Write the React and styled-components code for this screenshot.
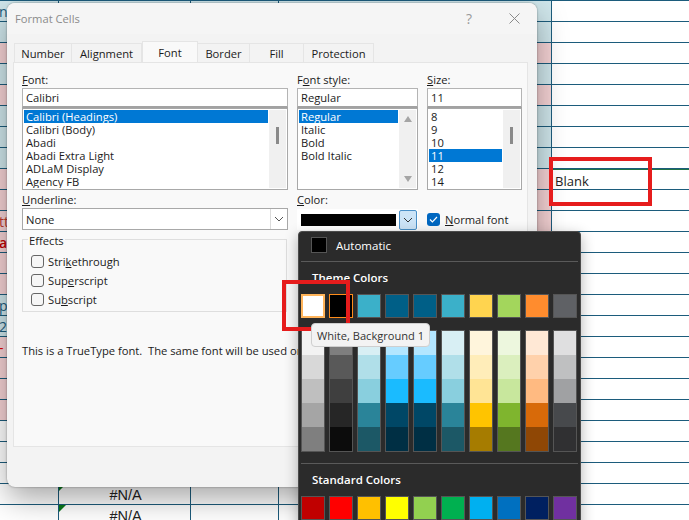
import styled, { createGlobalStyle } from "styled-components";

const Global = createGlobalStyle`
  html, body {
    margin: 0;
    height: 520px;
    overflow: hidden;
    background: #fff;
    font-family: "Open Sans", "Noto Sans", sans-serif;
    font-size: 11.2px;
    color: #1b1b1b;
  }
`;

const LINE = "#1c5c7c";

const Screen = styled.div`
  position: relative;
  width: 689px;
  height: 520px;
  overflow: hidden;
`;

/* ---------- sheet behind the dialog ---------- */
const Sheet = styled.div`
  margin-top: -20px;
`;

const Row = styled.div`
  display: grid;
  grid-template-columns: 59px 132px 88px 273px 1fr;
  height: 21px;
  box-sizing: border-box;
  border-bottom: 1px solid ${LINE};
`;

const Cell = styled.div`
  background: ${(p) => p.$fill || "transparent"};
  border-right: ${(p) => (p.$last ? "none" : `1px solid ${LINE}`)};
  overflow: hidden;
  white-space: nowrap;
`;

const LeadText = styled.span`
  display: block;
  line-height: 22px;
  font-size: 14px;
  font-weight: ${(p) => (p.$bold ? 600 : 400)};
  color: ${(p) => p.$color};
  margin-left: -1px;
`;

const NaText = styled.div`
  padding-left: 2px;
  text-align: center;
  font-family: "Liberation Sans", sans-serif;
  font-size: 14.5px;
  line-height: 23px;
  color: #222;
`;

const GreenCorner = styled.span`
  position: absolute;
  width: 0;
  height: 0;
  border-top: 7px solid #0a7a1c;
  border-right: 7px solid transparent;
`;

const BlankCell = styled.div`
  margin: -1px 0 -2px -1px;
  border-top: 2px solid #217346;
  border-bottom: 2px solid #217346;
  padding-left: 4px;
  font-family: "Open Sans", sans-serif;
  font-size: 13px;
  line-height: 23px;
  height: 20px;
  color: #222;
`;

/* ---------- dialog ---------- */
const Dialog = styled.div`
  position: absolute;
  left: 7px;
  top: 3px;
  width: 530px;
  height: 484px;
  box-sizing: border-box;
  background: #f3f3f3;
  border-radius: 8px;
  box-shadow: 0 0 2px rgba(0, 0, 0, 0.45), 0 12px 30px rgba(0, 0, 0, 0.34);
  overflow: hidden;
`;

const TitleBar = styled.div`
  display: flex;
  align-items: center;
  height: 31px;
  padding: 0 17px 0 8px;
  background: #f5f5f5;
  color: #8b8b8b;
`;

const Title = styled.div`
  flex: 1;
`;

const Help = styled.div`
  width: 43px;
  font-size: 14px;
  color: #9a9a9a;
`;

const Tabs = styled.div`
  display: flex;
  align-items: flex-end;
  height: 28px;
  padding-left: 7px;
`;

const Tab = styled.div`
  width: ${(p) => p.$w}px;
  height: ${(p) => (p.$active ? 21 : 19)}px;
  box-sizing: border-box;
  display: flex;
  align-items: center;
  justify-content: center;
  background: ${(p) => (p.$active ? "#f9f9f9" : "#f3f3f3")};
  border: 1px solid #e5e5e5;
  border-bottom: none;
  border-left: ${(p) => (p.$first || p.$active ? "1px solid #e5e5e5" : "none")};
`;

const Panel = styled.div`
  width: 515px;
  height: 385px;
  margin-left: 6px;
  box-sizing: border-box;
  padding: 10px 8px 0;
  background: #f9f9f9;
  border: 1px solid #e5e5e5;
  overflow: hidden;
`;

const Fields = styled.div`
  display: grid;
  grid-template-columns: 266px 121px 95px;
  column-gap: 9px;
`;

const Label = styled.div`
  height: 15px;
  line-height: 14px;
  margin-top: ${(p) => p.$top || 0}px;
`;

const TextBox = styled.div`
  height: 20px;
  box-sizing: border-box;
  border: 1px solid #b4b4b4;
  border-bottom: 2px solid #a2a2a2;
  background: #fff;
  padding-left: 3px;
  line-height: 18px;
`;

const ListBox = styled.div`
  display: flex;
  height: 82px;
  box-sizing: border-box;
  border: 1px solid #a8a8a8;
  background: #fff;
  padding: 1px;
`;

const Items = styled.div`
  flex: 1;
  overflow: hidden;
`;

const Item = styled.div`
  height: 13px;
  line-height: 13px;
  padding-left: 2px;
  background: ${(p) => (p.$on ? "#0078d4" : "transparent")};
  color: ${(p) => (p.$on ? "#fff" : "#1b1b1b")};
  white-space: nowrap;
`;

const Track = styled.div`
  position: relative;
  width: ${(p) => p.$w || 17}px;
  margin-left: 1px;
  background: #f0f0f0;
  display: flex;
  flex-direction: column;
  align-items: center;
`;

const Thumb = styled.div`
  width: 3px;
  height: 17px;
  margin-top: ${(p) => p.$top}px;
  background: #8a8a8a;
`;

const Arrow = styled.div`
  width: 0;
  height: 0;
  margin-top: ${(p) => (p.$down ? "auto" : "6px")};
  margin-bottom: ${(p) => (p.$down ? "6px" : "0")};
  border-left: 4px solid transparent;
  border-right: 4px solid transparent;
  ${(p) => (p.$down ? "border-top" : "border-bottom")}: 6px solid #a5a5a5;
`;

const SelectBox = styled.div`
  display: flex;
  height: 22px;
  box-sizing: border-box;
  border: 1px solid #a8a8a8;
  background: #fff;
  align-items: center;
  padding-left: 3px;
`;

const SelectText = styled.div`
  flex: 1;
`;

const Chevron = styled.div`
  width: 16px;
  height: 20px;
  display: flex;
  align-items: center;
  justify-content: center;
  border-left: 1px solid #dcdcdc;
`;

const ColorBox = styled.div`
  display: flex;
  align-items: center;
  height: 21px;
  margin-top: 1px;
  padding: 0 1px 0 4px;
  background: #fff;
`;

const ColorBar = styled.div`
  width: 96px;
  height: 12px;
  background: #000;
`;

const ColorButton = styled.div`
  width: 16px;
  height: 18px;
  margin-left: 3px;
  display: flex;
  align-items: center;
  justify-content: center;
  background: #cce4f7;
  border: 1px solid #4a90c8;
  border-radius: 2px;
`;

const NormalRow = styled.div`
  display: flex;
  align-items: center;
  gap: 5px;
  height: 20px;
  margin-top: 1px;
`;

const Tick = styled.div`
  width: 13px;
  height: 13px;
  border-radius: 3px;
  background: #0067c0;
  display: flex;
  align-items: center;
  justify-content: center;
`;

const Group = styled.div`
  position: relative;
  width: 265px;
  height: 73px;
  box-sizing: border-box;
  margin-top: 9px;
  padding: 12px 0 0 8px;
  border: 1px solid #dedede;
`;

const Legend = styled.div`
  position: absolute;
  top: -6px;
  left: 5px;
  padding: 0 1px;
  background: #f9f9f9;
  line-height: 13px;
`;

const Check = styled.div`
  display: flex;
  align-items: center;
  gap: 4px;
  height: 19px;
`;

const Box = styled.div`
  width: 11px;
  height: 11px;
  border: 1px solid #666;
  border-radius: 3px;
  background: #f6f6f6;
`;

const Info = styled.div`
  margin-top: 31px;
  line-height: 16px;
  white-space: nowrap;
`;

/* ---------- colour picker ---------- */
const Picker = styled.div`
  position: absolute;
  left: 298px;
  top: 231px;
  width: 283px;
  height: 310px;
  box-sizing: border-box;
  padding: 4px 2px 0;
  background: #2b2b2b;
  border: 1px solid #4b4b4b;
  border-radius: 4px;
  box-shadow: 0 4px 14px rgba(0, 0, 0, 0.3);
  color: #fff;
  font-size: 11.5px;
`;

const AutoRow = styled.div`
  display: flex;
  align-items: center;
  gap: 9px;
  height: 18px;
  padding-left: 10px;
`;

const AutoSwatch = styled.div`
  width: 14px;
  height: 14px;
  background: #000;
  border: 1px solid #555;
`;

const Rule = styled.div`
  height: 1px;
  margin: ${(p) => p.$m};
  background: #5a5a5a;
`;

const Heading = styled.div`
  height: 16px;
  line-height: 16px;
  padding-left: 11px;
  font-weight: 600;
  margin-bottom: 8px;
`;

const Swatches = styled.div`
  display: grid;
  grid-template-columns: repeat(10, 24px);
  column-gap: 4px;
  margin-bottom: ${(p) => p.$mb || 0}px;
`;

const Swatch = styled.div`
  height: 24px;
  box-sizing: border-box;
  background: ${(p) => p.$c};
  border: 1px solid ${(p) => p.$edge || "#555"};
  outline: ${(p) => (p.$ring ? `1px solid ${p.$ring}` : "none")};
  outline-offset: -2px;
`;

const Strip = styled.div`
  border: 1px solid #555;
  margin: -1px 0;
  display: flex;
  flex-direction: column;
`;

const Shade = styled.div`
  height: 24px;
  background: ${(p) => p.$c};
`;

const Tooltip = styled.div`
  position: absolute;
  left: 311px;
  top: 323px;
  height: 24px;
  box-sizing: border-box;
  padding: 0 5px;
  display: flex;
  align-items: center;
  background: #f3f3f3;
  border: 1px solid #cfcfcf;
  border-radius: 4px;
  font-size: 11.1px;
  color: #333;
  white-space: nowrap;
`;

/* red boxes drawn on top of the screenshot */
const Mark = styled.div`
  position: absolute;
  left: ${(p) => p.$x}px;
  top: ${(p) => p.$y}px;
  width: ${(p) => p.$w}px;
  height: ${(p) => p.$h}px;
  box-sizing: border-box;
  border: 4.5px solid #e61c1c;
`;

const rowFills = (() => {
  const blue = "#cfe6eb";
  const pink = "#f5d2d4";
  const map = { 0: blue, 1: blue, 2: blue, 3: pink, 4: blue, 5: pink, 6: blue, 7: blue, 8: blue };
  for (let i = 9; i <= 14; i++) map[i] = pink;
  map[15] = blue;
  map[16] = blue;
  for (let i = 17; i <= 20; i++) map[i] = pink;
  return map;
})();

const leadTexts = {
  1: { t: "n:", c: "#1c5c7c" },
  11: { t: "tt", c: "#c0392b" },
  12: { t: "al", c: "#c00000", b: true },
  15: { t: "p", c: "#1c5c7c" },
  16: { t: "2", c: "#1c5c7c" },
  17: { t: "-", c: "#e00000" },
};

const Down = ({ color = "#555" }) => (
  <svg width="10" height="6" viewBox="0 0 10 6" fill="none">
    <path d="M1 1l4 4 4-4" stroke={color} strokeWidth="1" />
  </svg>
);

const fontNames = ["Calibri (Headings)", "Calibri (Body)", "Abadi", "Abadi Extra Light", "ADLaM Display", "Agency FB"];
const styleNames = ["Regular", "Italic", "Bold", "Bold Italic"];
const sizes = ["8", "9", "10", "11", "12", "14"];

const theme = ["#ffffff", "#000000", "#3bb0c9", "#005f87", "#005f87", "#3bb0c9", "#ffd44f", "#a3d65c", "#ff8c2e", "#5f6165"];
const standard = ["#c00000", "#ff0000", "#ffc000", "#ffff00", "#92d050", "#00b050", "#00b0f0", "#0070c0", "#002060", "#7030a0"];
const shades = [
  ["#f2f2f2", "#d8d8d8", "#bfbfbf", "#a5a5a5", "#7f7f7f"],
  ["#7f7f7f", "#595959", "#3f3f3f", "#262626", "#0c0c0c"],
  ["#d8eff4", "#b0dfe9", "#89cfde", "#2a8499", "#1c5866"],
  ["#b3e6ff", "#66ccff", "#1abbff", "#004766", "#002f44"],
  ["#b3e6ff", "#66ccff", "#1abbff", "#004766", "#002f44"],
  ["#d8eff4", "#b0dfe9", "#89cfde", "#2a8499", "#1c5866"],
  ["#fff5dc", "#ffedb9", "#ffe495", "#ffc400", "#a67c00"],
  ["#edf7de", "#dbefbe", "#c8e79d", "#7fb52e", "#55771f"],
  ["#ffe8d5", "#ffd1ab", "#ffba81", "#d86a09", "#8f4705"],
  ["#dfdfe0", "#bfc0c1", "#a0a1a3", "#47494c", "#303032"],
];

const App = () => {
  const rows = Array.from({ length: 26 }, (_, i) => i);
  return (
    <Screen>
      <Global />
      <Sheet>
        {rows.map((i) => {
          const fill = rowFills[i];
          const lead = leadTexts[i];
          return (
            <Row key={i}>
              <Cell $fill={fill}>
                {lead && (
                  <LeadText $color={lead.c} $bold={lead.b}>
                    {lead.t}
                  </LeadText>
                )}
              </Cell>
              <Cell $fill={fill}>
                {i >= 24 && (
                  <>
                    <GreenCorner />
                    <NaText>#N/A</NaText>
                  </>
                )}
              </Cell>
              <Cell $fill={fill} />
              <Cell $fill={fill} />
              <Cell $last>{i === 9 && <BlankCell>Blank</BlankCell>}</Cell>
            </Row>
          );
        })}
      </Sheet>

      <Dialog>
        <TitleBar>
          <Title>Format Cells</Title>
          <Help>?</Help>
          <svg width="11" height="11" viewBox="0 0 11 11" fill="none">
            <path d="M0.5 0.5l10 10M10.5 0.5l-10 10" stroke="#8a8a8a" strokeWidth="1" />
          </svg>
        </TitleBar>
        <Tabs>
          <Tab $w={58} $first>Number</Tab>
          <Tab $w={70}>Alignment</Tab>
          <Tab $w={56} $active>Font</Tab>
          <Tab $w={52}>Border</Tab>
          <Tab $w={54}>Fill</Tab>
          <Tab $w={70}>Protection</Tab>
        </Tabs>
        <Panel>
          <Fields>
            <div>
              <Label><u>F</u>ont:</Label>
              <TextBox>Calibri</TextBox>
              <ListBox>
                <Items>
                  {fontNames.map((n, i) => (
                    <Item key={n} $on={i === 0}>{n}</Item>
                  ))}
                </Items>
                <Track>
                  <Thumb $top={17} />
                </Track>
              </ListBox>
            </div>
            <div>
              <Label>F<u>o</u>nt style:</Label>
              <TextBox>Regular</TextBox>
              <ListBox>
                <Items>
                  {styleNames.map((n, i) => (
                    <Item key={n} $on={i === 0}>{n}</Item>
                  ))}
                </Items>
                <Track>
                  <Arrow />
                  <Arrow $down />
                </Track>
              </ListBox>
            </div>
            <div>
              <Label><u>S</u>ize:</Label>
              <TextBox>11</TextBox>
              <ListBox>
                <Items>
                  {sizes.map((n) => (
                    <Item key={n} $on={n === "11"}>{n}</Item>
                  ))}
                </Items>
                <Track>
                  <Thumb $top={17} />
                </Track>
              </ListBox>
            </div>
            <div>
              <Label $top={3}><u>U</u>nderline:</Label>
              <SelectBox>
                <SelectText>None</SelectText>
                <Chevron>
                  <Down />
                </Chevron>
              </SelectBox>
            </div>
            <div>
              <Label $top={3}><u>C</u>olor:</Label>
              <ColorBox>
                <ColorBar />
                <ColorButton>
                  <Down color="#333" />
                </ColorButton>
              </ColorBox>
            </div>
            <div>
              <Label $top={3} />
              <NormalRow>
                <Tick>
                  <svg width="9" height="7" viewBox="0 0 9 7" fill="none">
                    <path d="M1 3.5l2.4 2.4L8 1" stroke="#fff" strokeWidth="1.2" />
                  </svg>
                </Tick>
                <span><u>N</u>ormal font</span>
              </NormalRow>
            </div>
          </Fields>
          <Group>
            <Legend>Effects</Legend>
            <Check><Box /><span>Stri<u>k</u>ethrough</span></Check>
            <Check><Box /><span>Sup<u>e</u>rscript</span></Check>
            <Check><Box /><span>Su<u>b</u>script</span></Check>
          </Group>
          <Info>This is a TrueType font.&nbsp; The same font will be used on both your printer and your screen.</Info>
        </Panel>
      </Dialog>

      <Picker>
        <AutoRow>
          <AutoSwatch />
          <span>Automatic</span>
        </AutoRow>
        <Rule $m="7px 0 8px" />
        <Heading>Theme Colors</Heading>
        <Swatches $mb={13}>
          {theme.map((c, i) => (
            <Swatch
              key={i}
              $c={c}
              $edge={i === 0 ? "#ffb45a" : i === 1 ? "#ff8c1a" : undefined}
              $ring={i === 0 ? "#ffb45a" : undefined}
            />
          ))}
        </Swatches>
        <Swatches>
          {shades.map((col, i) => (
            <Strip key={i}>
              {col.map((c, j) => (
                <Shade key={j} $c={c} />
              ))}
            </Strip>
          ))}
        </Swatches>
        <Rule $m="12px 0 8px" />
        <Heading>Standard Colors</Heading>
        <Swatches>
          {standard.map((c) => (
            <Swatch key={c} $c={c} />
          ))}
        </Swatches>
      </Picker>

      <Mark $x={549} $y={157} $w={103} $h={49} />
      <Mark $x={282} $y={280} $w={68} $h={51} />
      <Tooltip>White, Background 1</Tooltip>
    </Screen>
  );
};

export default App;
